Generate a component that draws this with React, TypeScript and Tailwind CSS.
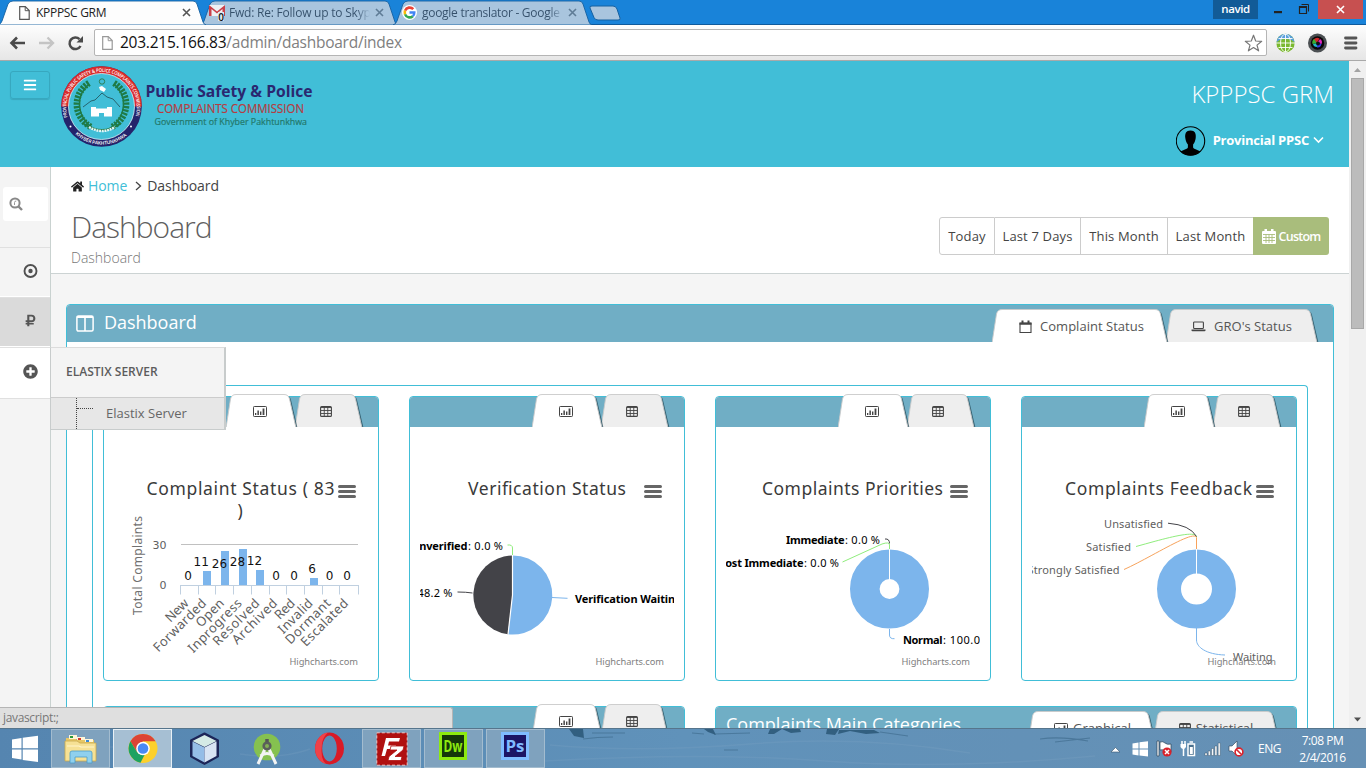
import React from "react";
import { FaHome, FaRubleSign, FaPlusCircle, FaBars } from "react-icons/fa";

const SANS = "font-['Open_Sans','Noto_Sans',sans-serif]";

/* ---------- small icons ---------- */

function ChartIcon() {
  return (
    <svg width="14" height="12" viewBox="0 0 14 12" fill="none">
      <rect x="0.500" y="0.500" width="13" height="10" rx="0.800" stroke="#444" strokeWidth="1" />
      <path d="M2 9V7h1.300v2zM4.400 9V4.500h1.500v4.500zM7 9V5.500h1.400v3.500zM9.600 9V2.500h1.800v6.500z" fill="#444" />
    </svg>
  );
}

function TableIcon() {
  return (
    <svg width="12" height="11" viewBox="0 0 12 11" fill="none">
      <rect x="0.600" y="0.600" width="10.800" height="9.800" rx="1" stroke="#444" strokeWidth="1.100" />
      <path d="M1 1.500h10M1 4.500h10M1 7.500h10M4.250 1v9.500M7.750 1v9.500" stroke="#444" strokeWidth="0.900" />
    </svg>
  );
}

function CalendarOutline() {
  return (
    <svg width="13" height="14" viewBox="0 0 13 14" fill="none">
      <path d="M1 3.200h11v9.300H1z" stroke="#444" strokeWidth="1.100" />
      <path d="M0.500 2.600h12v2.200h-12zM2.500 0.500h2v3h-2zM8.500 0.500h2v3h-2z" fill="#444" />
    </svg>
  );
}

function CalendarSolid() {
  return (
    <svg width="14" height="15" viewBox="0 0 14 15">
      <path d="M0 3q0-1 1-1h12q1 0 1 1v11q0 1-1 1H1q-1 0-1-1z" fill="#fff" />
      <path d="M2.500 0h2.500v4h-2.500zM9 0h2.500v4H9z" fill="#fff" />
      <path d="M1 5.500h12M1 8.500h12M1 11.500h12M4 5.500v8.500M7 5.500v8.500M10 5.500v8.500" stroke="#a9bd7c" strokeWidth="0.900" />
    </svg>
  );
}

function LaptopIcon() {
  return (
    <svg width="15" height="11" viewBox="0 0 15 11" fill="none">
      <rect x="2.600" y="1" width="9.800" height="6.500" rx="0.800" stroke="#444" strokeWidth="1.100" />
      <path d="M0.500 8.600h14v1q0 0.700-1 0.700h-12q-1 0-1-0.700z" fill="#444" />
    </svg>
  );
}

function PageIcon({ color = "#555", className = "" }: { color?: string; className?: string }) {
  return (
    <svg className={className} width="11" height="14" viewBox="0 0 11 14" fill="#fff">
      <path d="M0.700 0.700h5.600l3.900 3.900v8.700h-9.500z" stroke={color} strokeWidth="1.200" />
      <path d="M6.200 0.700v4h4" stroke={color} strokeWidth="1" fill="none" />
    </svg>
  );
}

function CloseX({ color }: { color: string }) {
  return (
    <svg width="9" height="9" viewBox="0 0 9 9">
      <path d="M1 1l7 7M8 1l-7 7" stroke={color} strokeWidth="1.600" />
    </svg>
  );
}

/* ---------- browser chrome ---------- */

function BrowserTab({ w, fill, className, children }: { w: number; fill: string; className: string; children: React.ReactNode }) {
  return (
    <div className={`relative flex h-[25px] shrink-0 items-center ${className}`} style={{ width: w }}>
      <svg className="absolute inset-0" width={w} height="25">
        <path
          d={`M0 25 Q3 24 4 21 L10 4 Q11.500 1 15 1 H${w - 13} Q${w - 10} 1 ${w - 9} 4 L${w - 3} 22 Q${w - 2} 24.500 ${w} 25 Z`}
          fill={fill}
          stroke="#1560a0"
          strokeWidth="0.900"
        />
      </svg>
      <div className="relative flex w-full items-center">{children}</div>
    </div>
  );
}

function TabStrip() {
  return (
    <div className="flex h-[25px] border-b border-[#0f5a9c] bg-[#1983d9]">
      <BrowserTab w={208} fill="#fdfdfd" className="z-10 -ml-[2px]">
        <PageIcon className="ml-[21px]" />
        <span className="ml-[6px] w-[146px] text-[12px] leading-[18px] tracking-[-0.3px] whitespace-nowrap text-[#222]">KPPPSC GRM</span>
        <CloseX color="#555" />
      </BrowserTab>
      <BrowserTab w={198} fill="#a9c5de" className="-ml-[6px]">
        <svg className="ml-[9px]" width="16" height="17" viewBox="0 0 16 17">
          <rect x="0" y="1" width="16" height="11" fill="#eef1f5" />
          <path d="M0 12V1l8 6.500L16 1v11h-2.500V5L8 9.500 2.500 5v7z" fill="#c9404a" />
          <path d="M9 8h6v9H9z" fill="#dfe9f3" />
          <text x="9.200" y="16.500" fontSize="10" fontWeight="600" fill="#111" fontFamily="Open Sans">0</text>
        </svg>
        <span className="ml-[4px] w-[141px] overflow-hidden bg-linear-to-r from-[#35506b] from-90% to-[#a9c5de] bg-clip-text text-[12px] leading-[18px] tracking-[-0.22px] whitespace-nowrap text-transparent">
          Fwd: Re: Follow up to Skype
        </span>
        <span className="ml-[5px]"><CloseX color="#5f7c96" /></span>
      </BrowserTab>
      <BrowserTab w={199} fill="#a9c5de" className="-ml-[5px]">
        <svg className="ml-[9px]" width="15" height="15" viewBox="0 0 16 16" fill="none" strokeWidth="2.800">
          <circle cx="8" cy="8" r="8" fill="#fff" />
          <path d="M12 4.500A5.200 5.200 0 0 0 3.300 6" stroke="#ea4335" />
          <path d="M3.300 6a5.200 5.200 0 0 0 0 4" stroke="#fbbc05" />
          <path d="M3.300 10a5.200 5.200 0 0 0 8.200 2" stroke="#34a853" />
          <path d="M8 8h5.200a5.200 5.200 0 0 1-1.700 4" stroke="#4285f4" strokeWidth="2.500" />
        </svg>
        <span className="ml-[5px] w-[141px] overflow-hidden bg-linear-to-r from-[#35506b] from-90% to-[#a9c5de] bg-clip-text text-[12px] leading-[18px] tracking-[-0.28px] whitespace-nowrap text-transparent">
          google translator - Google
        </span>
        <span className="ml-[5px]"><CloseX color="#5f7c96" /></span>
      </BrowserTab>
      <svg className="mt-[5px] -ml-[3px]" width="32" height="17" viewBox="0 0 32 17">
        <path d="M1 3Q0 1 3 1H24q3 0 4 3l3 9q1 2-2 2H9q-3 0-4-2.500z" fill="#a9c5de" stroke="#1560a0" />
      </svg>
      <div className="ml-auto flex items-start">
        <div className="h-[19px] w-[45px] bg-[#125b97] text-center text-[11.500px] leading-[18px] font-semibold tracking-[-0.4px] text-white">navid</div>
        <svg width="60" height="19" viewBox="0 0 60 19">
          <path d="M16 11h8v2.200h-8z" fill="#222" />
          <path d="M41.500 6.500h7v7h-7z" fill="none" stroke="#222" strokeWidth="1.200" />
          <path d="M41 6h8v2h-8z" fill="#222" />
          <path d="M43.500 4.500h7v7" fill="none" stroke="#222" />
        </svg>
        <div className="mr-[3px] flex h-[19px] w-[45px] items-center justify-center bg-[#c75050]">
          <CloseX color="#fff" />
        </div>
      </div>
    </div>
  );
}

function Toolbar() {
  return (
    <div className="flex h-[36px] items-center border-b border-[#a9a9a9] bg-linear-to-b from-[#fdfdfd] to-[#e6e6e6]">
      <svg className="ml-[9px]" width="76" height="18" viewBox="0 0 76 18" fill="none" strokeWidth="2.300">
        <path d="M16 9H3M8 3.500L2.500 9L8 14.500" stroke="#4a4a4a" strokeWidth="2.600" />
        <path d="M30 9H43M38.500 3.500L44 9L38.500 14.500" stroke="#c4c4c4" />
        <path d="M71.500 12A5.800 5.800 0 1 1 70.500 5.200" stroke="#4a4a4a" strokeWidth="2.500" />
        <path d="M74 2v6.500h-6.500z" fill="#4a4a4a" />
      </svg>
      <div className="ml-[9px] flex h-[27px] w-[1173px] items-center rounded-[2px] border border-[#b5b5b5] bg-white">
        <PageIcon color="#999" className="ml-[7px]" />
        <span className="ml-[7px] text-[15.500px] tracking-[-0.24px] whitespace-nowrap text-[#808080]">
          <span className="text-[#111]">203.215.166.83</span>/admin/dashboard/index
        </span>
        <svg className="mr-[3px] ml-auto" width="19" height="18" viewBox="0 0 19 18">
          <path d="M9.500 1.200l2.200 5.800 6 0.300-4.700 3.800 1.600 5.700-5.100-3.300-5.100 3.300 1.600-5.700L1.300 7.300l6-0.300z" fill="#fff" stroke="#777" strokeWidth="1.200" strokeLinejoin="round" />
        </svg>
      </div>
      <svg className="ml-[8px]" width="20" height="20" viewBox="0 0 20 20" fill="none">
        <circle cx="10.500" cy="10" r="9.200" fill="#7bb92f" />
        <path d="M1.300 10a9.200 9.200 0 0 1 18.400 0q-2-4-9.200-4t-9.200 4" fill="#5a9fdc" />
        <path d="M10.500 1v18M1 10h19M3.500 5.500h14M3.500 14.500h14" stroke="#fff" strokeWidth="0.900" />
        <ellipse cx="10.500" cy="10" rx="5" ry="9" stroke="#fff" strokeWidth="0.900" />
      </svg>
      <svg className="ml-[12px]" width="20" height="20" viewBox="0 0 20 20">
        <circle cx="10.500" cy="10" r="9.500" fill="#4b4f52" />
        <circle cx="10.500" cy="10" r="6.800" fill="#080808" />
        <path d="M10 10L6.500 6.500q3-3 6-1z" fill="#d0262a" />
        <path d="M10 10l3-4q3 2 1.500 5z" fill="#e025c0" />
        <path d="M10 10l4.500 1q-1 4-4.500 3.500z" fill="#3a3ce0" />
        <path d="M10 10v4q-3.500 0-4-3z" fill="#20b8c8" />
        <path d="M10 10l-4.500 1q-1-3 1.500-5z" fill="#3ab030" />
        <circle cx="11" cy="10.500" r="2" fill="#111" />
      </svg>
      <svg className="ml-[16px]" width="16" height="14" viewBox="0 0 16 14">
        <path d="M2.500 2h10.500M2.500 7h10.500M2.500 12h10.500" stroke="#555" strokeWidth="2.800" strokeLinecap="round" />
      </svg>
    </div>
  );
}

/* ---------- page header ---------- */

function Logo() {
  return (
    <svg className="mt-[4px] ml-[10px]" width="256" height="84" viewBox="60 65 256 84">
      <defs>
        <path id="ringTop" d="M66.500 117.500A36.500 36.500 0 1 1 136.500 117.500" />
        <path id="ringBottom" d="M70.500 126A37 37 0 0 0 133 126" />
      </defs>
      <circle cx="101.500" cy="106.500" r="40.300" fill="#24236b" />
      <path d="M61.200 106.500a40.300 40.300 0 0 1 80.600 0z" fill="#d92c2c" />
      <circle cx="101.500" cy="106.500" r="33" fill="#41bed7" stroke="#d5ecf2" strokeWidth="0.800" />
      <g fill="#fff" fontFamily="Open Sans" fontWeight="600">
        <text fontSize="5" dy="1.300"><textPath href="#ringTop" textLength="134" lengthAdjust="spacingAndGlyphs">PROVINCIAL PUBLIC SAFETY &amp; POLICE COMPLAINTS COMMISSION</textPath></text>
        <text fontSize="4.800" dy="1.500"><textPath href="#ringBottom" startOffset="9" textLength="54">KHYBER PAKHTUNKHWA</textPath></text>
      </g>
      <circle cx="70.500" cy="126.500" r="1" fill="#fff" />
      <circle cx="131" cy="126.500" r="1" fill="#fff" />
      <g fill="none" stroke="#1f7a45">
        <path d="M89 83C72 94 73 117 91 127" strokeWidth="6.500" strokeDasharray="2.200 1.200" />
        <path d="M114 83C131 94 130 117 112 127" strokeWidth="6.500" strokeDasharray="2.200 1.200" />
        <path d="M89 84C75 96 76 117 94 129M114 84C128 96 127 117 109 129" strokeWidth="1.500" />
        <path d="M83 107l8-6 4-1 7-7 5 4 6 2 7 8" stroke="#27646f" strokeWidth="1" />
        <circle cx="102" cy="81.500" r="2.700" stroke="#2c8058" />
      </g>
      <path d="M99 87l3-1 4 3-2 3-4-2z" fill="#fff" />
      <path d="M91 107h5v1.500h11v-1.500h5v9.500h-8v-3.500h-5v3.500h-8z" fill="#fff" />
      <path d="M84 124q18 12 36 0" stroke="#1f7a45" strokeWidth="2" fill="none" />
      <path d="M89 127q13 8 26 0" stroke="#e7f5f7" strokeWidth="2.500" strokeDasharray="2 .7" fill="none" />
      <text x="145.500" y="96.500" fontSize="15.500" fontWeight="700" fill="#2a2870" fontFamily="Open Sans" textLength="167" lengthAdjust="spacingAndGlyphs">Public Safety &amp; Police</text>
      <text x="157" y="113" fontSize="12.500" fill="#b83b3f" stroke="#b83b3f" strokeWidth="0.200" fontFamily="Open Sans" textLength="147" lengthAdjust="spacingAndGlyphs">COMPLAINTS COMMISSION</text>
      <text x="154.500" y="125" fontSize="9.500" fill="#23776a" stroke="#23776a" strokeWidth="0.200" fontFamily="Open Sans" textLength="152.500" lengthAdjust="spacingAndGlyphs">Government of Khyber Pakhtunkhwa</text>
    </svg>
  );
}

function PageHeader() {
  return (
    <div className="flex h-[106px] shrink-0 items-start bg-[#41bed7]">
      <div className="mt-[10px] ml-[10px] flex h-[28px] w-[40px] items-center justify-center rounded-[3px] border border-[#37a8bf] text-white shadow-[0_1px_1px_rgba(0,0,0,0.12)]">
        <FaBars size={14} />
      </div>
      <Logo />
      <div className="ml-auto flex flex-col items-end">
        <div className="mt-[16px] mr-[15px] text-[24px] leading-[34px] font-light text-white">KPPPSC GRM</div>
        <div className="mt-[15px] mr-[25px] flex items-center">
          <svg width="30" height="30" viewBox="0 0 30 30">
            <circle cx="14.500" cy="15" r="14.200" fill="none" stroke="#000" strokeWidth="1.100" />
            <path d="M14.500 4.500c4.500 0 5.700 3 5.200 7.500-.4 3-1.200 5-2.600 6.500v3q0 1 3 2l4.500 2Q19.500 29.500 14.500 29.500T4.400 25.500l4.500-2q3-1 3-2v-3C10.500 17 9.700 15 9.300 12c-.5-4.500.7-7.500 5.200-7.500z" fill="#000" />
          </svg>
          <span className="mb-[2px] ml-[7px] text-[13px] leading-[20px] font-bold tracking-[-0.22px] text-white">Provincial PPSC</span>
          <svg className="mb-[3px] ml-[4px]" width="11" height="8" viewBox="0 0 11 8" fill="none">
            <path d="M1 1.500l4.500 4.500L10 1.500" stroke="#fff" strokeWidth="1.600" />
          </svg>
        </div>
      </div>
    </div>
  );
}

/* ---------- sidebar ---------- */

function Sidebar() {
  return (
    <div className="relative z-10 flex w-[51px] shrink-0 flex-col border-r border-[#c9d2d0] bg-[#f4f4f4] text-[#555]">
      <div className="mt-[20px] ml-[3px] flex h-[34px] w-[45px] items-center rounded-[3px] bg-white">
        <svg className="ml-[6px]" width="15" height="15" viewBox="0 0 15 15" fill="none">
          <circle cx="6" cy="6" r="4.600" stroke="#888" strokeWidth="2" />
          <path d="M9.500 9.500l3.500 3.500" stroke="#888" strokeWidth="2.400" />
          <path d="M5.500 8V5.500q0-1.500 1.800-1.500" stroke="#999" strokeWidth="1" />
        </svg>
      </div>
      <div className="mt-[26px] flex h-[50px] items-center border-t border-b border-t-[#e0e0e0] border-b-white pb-[2px] pl-[23px]">
        <svg width="15" height="14" viewBox="0 0 15 14">
          <circle cx="7.500" cy="7" r="6" fill="none" stroke="#505050" strokeWidth="1.900" />
          <circle cx="7.500" cy="7" r="2.200" fill="#505050" />
        </svg>
      </div>
      <div className="flex h-[50px] items-center border-t border-b border-t-[#e0e0e0] border-b-white bg-[#dadada] pb-[3px] pl-[24px]"><FaRubleSign size={13} /></div>
      <div className="relative flex h-[52px] items-center border-t border-b border-[#e0e0e0] bg-white pb-[4px] pl-[23px]">
        <FaPlusCircle size={15} />
        <div className="absolute -top-px left-[50px] h-[83px] w-[176px] border-t border-r-2 border-b border-l border-[#c8cccc] border-t-[#dcdcdc] bg-[#f4f4f4]">
          <div className="flex h-[50px] items-center border-b border-[#ccc] pb-[2px] pl-[15px] text-[12px] leading-none font-semibold text-[#5c5c5c]">ELASTIX SERVER</div>
          <div className="flex h-[31px] bg-[#e7e7e7]">
            <div className="ml-[25px] w-[1px] border-l border-dotted border-[#444]" />
            <div className="mt-[10px] w-[16px] border-t border-dotted border-[#444]" />
            <div className="ml-[13px] flex items-center text-[13px] text-[#666]">Elastix Server</div>
          </div>
        </div>
      </div>
    </div>
  );
}

/* ---------- content ---------- */

function Tab({ w, active, className = "", children }: { w: number; active?: boolean; className?: string; children: React.ReactNode }) {
  const p = `M0 34 L4.500 5 Q5.500 0.500 10 0.500 H${w - 12} Q${w - 7.5} 0.500 ${w - 6.5} 5 L${w} 34`;
  return (
    <div className={`relative flex h-[33px] shrink-0 items-center justify-center text-[13px] text-[#555] ${active ? "z-[2]" : "z-[1]"} ${className}`} style={{ width: w }}>
      <svg className="absolute top-0 left-0" width={w + 5} height="33">
        <path d={`M${w - 11} 1.500 Q${w - 6} 1.500 ${w - 5} 6 L${w + 1.5} 34 H${w - 11} Z`} fill="#1e4654" opacity="0.750" />
        <path d={p} fill={active ? "#fff" : "#eee"} stroke="#c9c9c9" strokeWidth="0.900" />
      </svg>
      <div className="relative mt-[2px] flex items-center whitespace-nowrap">{children}</div>
    </div>
  );
}

function Burger({ x }: { x: number }) {
  return <path d={`M${x + 1} 486.500h15M${x + 1} 491.500h15M${x + 1} 496.500h15`} stroke="#666" strokeWidth="3" strokeLinecap="round" />;
}

const CF = "Noto Sans, Open Sans, sans-serif";

function Txt({ x, y, l, s = 11, b, c = "#000", anchor, children }: { x: number; y: number; l?: number; s?: number; b?: boolean; c?: string; anchor?: "end" | "middle"; children: string }) {
  return (
    <text x={x} y={y} fontSize={s} fontWeight={b ? 700 : 400} fill={c} textAnchor={anchor} textLength={l} xmlSpace="preserve">
      {children}
    </text>
  );
}

function Chart({ x, title, tx, tl, children }: { x: number; title: string; tx: number; tl: number; children: React.ReactNode }) {
  return (
    <div className="flex h-[253px] justify-center overflow-hidden">
      <svg className="block" width="254" height="253" viewBox={`${x + 11} 427 254 253`} fontFamily={CF} fill="none">
        <Txt x={tx} y={495} l={tl} s={17.500} c="#3a3a3a">{title}</Txt>
        <Burger x={x + 235.500} />
        {children}
        <Txt x={x + 186.500} y={665} l={68.500} s={9.300} c="#808080">Highcharts.com</Txt>
      </svg>
    </div>
  );
}

const CATS: [string, number][] = [
  ["New", 27], ["Forwarded", 69], ["Open", 34], ["Inprogress", 70], ["Resolved", 60],
  ["Archived", 58], ["Red", 23], ["Invalid", 43], ["Dormant", 58], ["Escalated", 61],
];
const BARS = [[203, 571], [221, 551], [239, 549], [256, 570], [310, 578]];
const VALUES: [string, number, number][] = [
  ["0", 188, 580], ["11", 201.200, 566], ["26", 219.500, 568], ["28", 237.500, 566], ["12", 254.500, 565],
  ["0", 276, 580], ["0", 294, 580], ["6", 312, 573], ["0", 329.500, 580], ["0", 347, 580],
];

function StatusChart() {
  return (
    <Chart x={103} title="Complaint Status ( 83" tx={146.500} tl={188}>
      <Txt x={237.500} y={517} s={17.500} c="#3a3a3a">)</Txt>
      <g transform="rotate(-90 142 615)"><Txt x={142} y={615} l={99} s={12} c="#707070">Total Complaints</Txt></g>
      <g fontFamily="DejaVu Sans">
        <Txt x={166.500} y={549} s={11} c="#606060" anchor="end">30</Txt>
        <Txt x={166.500} y={589} s={11} c="#606060" anchor="end">0</Txt>
      </g>
      <path d="M181 544.500H358" stroke="#c0c0c0" />
      {BARS.map(([bx, by]) => <rect key={bx} x={bx} y={by} width="8" height={585 - by} fill="#7cb5ec" />)}
      <path d="M180 585.500H358.500M180.500 585v9.500M198.500 585v9.500M215.500 585v9.500M233.500 585v9.500M251.500 585v9.500M269.500 585v9.500M286.500 585v9.500M304.500 585v9.500M322.500 585v9.500M339.500 585v9.500M358.500 585v9.500" stroke="#c0d0e0" />
      <g fontFamily="DejaVu Sans">
        {VALUES.map(([v, vx, vy], i) => <Txt key={i} x={vx} y={vy} s={12} anchor="middle" c="#111">{v}</Txt>)}
      </g>
      {CATS.map(([n, l], i) => {
        const ex = 189.500 + i * 17.750;
        return (
          <g key={n} transform={`rotate(-45 ${ex} 604)`}>
            <Txt x={ex - l} y={604} l={l} s={13} c="#606060">{n}</Txt>
          </g>
        );
      })}
    </Chart>
  );
}

function VerificationChart() {
  return (
    <Chart x={409} title="Verification Status" tx={468} tl={158}>
      <Txt x={411} y={550} l={56.500} b>Unverified</Txt>
      <Txt x={468} y={550} l={35}>: 0.0 %</Txt>
      <Txt x={417.500} y={597} l={35}>48.2 %</Txt>
      <Txt x={575} y={603} l={107} b>Verification Waiting</Txt>
      <path d="M512.500 595V555.500A39.500 39.500 0 1 1 508 634.200Z" fill="#7cb5ec" />
      <path d="M512.500 595L508 634.200A39.500 39.500 0 0 1 512.500 555.500Z" fill="#434348" />
      <path d="M512.500 555V595L508 634.500" stroke="#fff" strokeWidth="1.200" />
      <path d="M507.500 545Q512.500 544.500 512.500 548V555" stroke="#90ed7d" />
      <path d="M457.500 592Q466 592 472.500 593" stroke="#434348" />
      <path d="M552 597.500L567.500 598.300" stroke="#7cb5ec" />
    </Chart>
  );
}

function PrioritiesChart() {
  return (
    <Chart x={715} title="Complaints Priorities" tx={762} tl={181}>
      <Txt x={786} y={544} l={58.500} b>Immediate</Txt>
      <Txt x={845} y={544} l={35}>: 0.0 %</Txt>
      <Txt x={715} y={567} l={88.500} b>Most Immediate</Txt>
      <Txt x={804} y={567} l={35}>: 0.0 %</Txt>
      <Txt x={903} y={644} l={39.500} b>Normal</Txt>
      <Txt x={943} y={644} l={50}>: 100.0 %</Txt>
      <circle cx="889.500" cy="589" r="24.700" stroke="#7cb5ec" strokeWidth="29.600" />
      <path d="M889.500 549V580" stroke="#fff" />
      <path d="M885 539Q889.500 538.500 889.500 543.500" stroke="#434348" />
      <path d="M842.500 562L882 544Q889.500 541.500 889.500 545V549" stroke="#90ed7d" />
      <path d="M889.500 629V635Q889.500 639 894.500 638.700" stroke="#7cb5ec" />
    </Chart>
  );
}

function FeedbackChart() {
  return (
    <Chart x={1021} title="Complaints Feedback" tx={1065} tl={187}>
      <Txt x={1104} y={528} l={59} c="#606060">Unsatisfied</Txt>
      <Txt x={1086} y={551} l={45} c="#606060">Satisfied</Txt>
      <Txt x={1027.500} y={574} l={92} c="#606060">Strongly Satisfied</Txt>
      <Txt x={1233} y={660.500} l={39.500} c="#606060">Waiting</Txt>
      <circle cx="1196.500" cy="589" r="27.500" stroke="#7cb5ec" strokeWidth="24" />
      <path d="M1196.500 549V574" stroke="#fff" />
      <path d="M1136 546.500C1160 540 1196 529 1196.500 537" stroke="#90ed7d" />
      <path d="M1124 569.500C1150 558 1196 528 1196.500 538V549" stroke="#f7a35c" />
      <path d="M1168 523.200Q1190 525 1196.500 536.500" stroke="#434348" />
      <path d="M1196.500 628V640C1196.500 647 1206 654.500 1225 655" stroke="#7cb5ec" />
    </Chart>
  );
}

function CardTabs() {
  return (
    <div className="flex h-[30px] items-end justify-end rounded-t-[3px] bg-[#70aec5] pr-[16px]">
      <Tab w={70} active><span className="-ml-[2px]"><ChartIcon /></span></Tab>
      <Tab w={67} className="-ml-px"><span className="-ml-[6px]"><TableIcon /></span></Tab>
    </div>
  );
}

function Card({ children }: { children: React.ReactNode }) {
  return (
    <div className="h-[285px] w-[276px] rounded-[4px] border border-[#41bed7] bg-white">
      <CardTabs />
      {children}
    </div>
  );
}

function Dashboard() {
  return (
    <div className="flex w-[1298px] flex-col overflow-hidden bg-[#f5f5f5]">
      <div className="flex h-[107px] shrink-0 justify-between border-b border-[#ccd3d3] bg-white pr-[20px] pl-[20px]">
        <div>
          <div className="mt-[9px] flex h-[20px] items-center text-[14px] leading-[20px] text-[#444]">
            <FaHome size={13} color="#222" />
            <span className="ml-[4px] tracking-[-0.1px] text-[#41bed7]">Home</span>
            <svg className="ml-[8px]" width="7" height="10" viewBox="0 0 7 10" fill="none"><path d="M1 1l4.500 4L1 9" stroke="#444" strokeWidth="1.300" /></svg>
            <span className="ml-[5px] tracking-[-0.05px]">Dashboard</span>
          </div>
          <div className="mt-[9px] text-[30px] leading-[44px] font-light tracking-[-1px] text-[#606060]">Dashboard</div>
          <div className="text-[14px] leading-[18px] font-light text-[#777]">Dashboard</div>
        </div>
        <div className="mt-[50px] flex h-[38px] text-[13px] tracking-[0.15px] text-[#444]">
          <div className="flex w-[56px] items-center justify-center rounded-l-[3px] border border-[#ccc] pt-[2px]">Today</div>
          <div className="flex w-[86px] items-center justify-center border-t border-r border-b border-[#ccc] pt-[2px]">Last 7 Days</div>
          <div className="flex w-[87px] items-center justify-center border-t border-r border-b border-[#ccc] pt-[2px]">This Month</div>
          <div className="flex w-[85px] items-center justify-center border-t border-b border-[#ccc] pt-[2px]">Last Month</div>
          <div className="flex w-[76px] items-center justify-center gap-[3px] rounded-r-[3px] bg-[#a9bd7c] text-[12.500px] font-semibold tracking-[-0.75px] text-white"><CalendarSolid /><span className="pt-[2px]">Custom</span></div>
        </div>
      </div>
      <div className="mt-[30px] ml-[15px] flex h-[440px] w-[1268px] flex-col rounded-t-[4px] border border-[#41bed7] bg-white">
        <div className="flex h-[37px] shrink-0 items-end rounded-t-[3px] bg-[#70aec5] pr-[16px]">
          <div className="mr-auto flex h-full items-center pb-[2px] text-[18px] tracking-[-0.02px] text-white">
            <svg className="mt-[2px] ml-[9px]" width="18" height="17" viewBox="0 0 18 17" fill="none" stroke="#fff"><rect x="0.900" y="0.900" width="16.200" height="15.200" rx="1.500" strokeWidth="1.500" /><path d="M9 3v13" strokeWidth="1.600" /><path d="M1 2h16" strokeWidth="2" /></svg>
            <span className="ml-[10px]">Dashboard</span>
          </div>
          <Tab w={175} active><span className="ml-[4px]"><CalendarOutline /></span><span className="ml-[8px] tracking-[0.02px]">Complaint Status</span></Tab>
          <Tab w={151} className="-ml-px"><LaptopIcon /><span className="ml-[8px]">GRO's Status</span></Tab>
        </div>
        <div className="mt-[43px] ml-[25px] flex w-[1216px] grow flex-col rounded-t-[4px] border border-b-0 border-[#41bed7] px-[10px] pt-[10px]">
          <div className="flex gap-[30px]">
            <Card><StatusChart /></Card>
            <Card><VerificationChart /></Card>
            <Card><PrioritiesChart /></Card>
            <Card><FeedbackChart /></Card>
          </div>
          <div className="mt-[25px] flex gap-[30px]">
            <div className="w-[582px] rounded-t-[4px] border border-[#41bed7]">
              <CardTabs />
            </div>
            <div className="w-[582px] rounded-t-[4px] border border-[#41bed7]">
              <div className="flex h-[37px] items-end rounded-t-[3px] bg-[#70aec5] pr-[17px]">
                <span className="mr-auto ml-[10px] text-[18px] leading-[39px] text-white">Complaints Main Categories</span>
                <Tab w={127} active><span className="ml-[2px]"><ChartIcon /></span><span className="ml-[5px]">Graphical</span></Tab>
                <Tab w={126} className="-ml-[2px]"><TableIcon /><span className="ml-[5px]">Statistical</span></Tab>
              </div>
            </div>
          </div>
        </div>
      </div>
    </div>
  );
}

/* ---------- taskbar ---------- */

function TaskButton({ active, className = "", children }: { active?: boolean; className?: string; children: React.ReactNode }) {
  return (
    <div className={`flex h-[39px] w-[59px] items-center justify-center border ${active ? "border-[#e8f0f6] bg-[#a6bfd3]" : "border-[#a3bccf] bg-[#7fa2be]"} ${className}`}>
      {children}
    </div>
  );
}

function AdobeIcon({ label, bg, fg }: { label: string; bg: string; fg: string }) {
  return (
    <div className="mr-[2px] mb-[5px] flex h-[28px] w-[28px] items-center justify-center border-[3px]" style={{ background: bg, borderColor: fg }}>
      <svg width="22" height="22" viewBox="0 0 22 22">
        <text x="1.500" y="16.500" fontSize="16" fontWeight="700" fontFamily="Open Sans" textLength="19" lengthAdjust="spacingAndGlyphs" fill={fg}>{label}</text>
      </svg>
    </div>
  );
}

function Taskbar() {
  return (
    <div className="relative flex h-[40px] items-center overflow-hidden border-t border-[#56758c] bg-linear-to-r from-[#5585b0] via-[#6092ba] to-[#6690b4]">
      <svg className="absolute inset-0" width="1366" height="40">
        <g fill="#234f6e" opacity="0.750">
          <path d="M383 0h7l-1 4-6 1zM398 0h12l-3 3-8 1z" />
          <path d="M569 0h14l1 9-10-2z" />
          <path d="M704 0h9l3 6-8-3zM770 0h12l-8 5h-6zM782 0h18l1 3-10 1zM827 0h12l-4 6-9-1zM839 1h35l6 3-14 1-16-3-12 3z" />
        </g>
        <path d="M583 10q14-2 30-2M592 4h33M692 4l12 1M714 5l36-1M724 21h14M880 3l28 4M1040 10q20-3 48 2M1055 13l35-4" stroke="#34607f" strokeWidth="1.200" opacity="0.500" fill="none" />
        <path d="M550 16q90 8 200-1t220 9M545 32q160-9 280 0t270-5M110 18h50M240 25q40 6 70-5" stroke="#89abc6" strokeWidth="1.500" opacity="0.200" fill="none" />
      </svg>
      <svg className="relative ml-[11px]" width="28" height="28" viewBox="0 0 28 28" fill="#fff">
        <path d="M1 4.500l9.500-1.500v10.300H1zM11.700 2.800L27 0.700v12.600H11.700zM1 14.500h9.500v10L1 23zM11.700 14.500H27V27l-15.300-2z" />
      </svg>
      <TaskButton className="relative ml-[12px]">
        <svg width="34" height="32" viewBox="0 0 34 32">
          <path d="M2 5h9l2 2h17v19H2z" fill="#e6c766" />
          <path d="M5 2h8v4H5zM13 4h8v3h-8zM21 6h8v3h-8z" fill="#fff6d8" />
          <path d="M6 3h3v2H6z" fill="#2a9a3c" />
          <path d="M14 5h3v2h-3z" fill="#d63a2c" />
          <path d="M22 7h3v2h-3z" fill="#3a8ad6" />
          <path d="M1 8h12l3 2h16v18H1z" fill="#f6e195" stroke="#c9a84c" strokeWidth="0.800" />
          <path d="M3 13h12l2 1h13" stroke="#fff6cc" strokeWidth="1.200" fill="none" />
          <path d="M6 30V20q0-2 2-2h18q2 0 2 2v10h-5v-6H11v6z" fill="#8fd0ee" stroke="#4b9cc8" strokeWidth="0.800" />
        </svg>
      </TaskButton>
      <TaskButton active className="relative ml-[3px]">
        <svg width="30" height="31" viewBox="0 0 30 30">
          <circle cx="15" cy="15" r="14.500" fill="#fcd02c" />
          <path d="M2.400 7.800A14.500 14.500 0 0 1 27.600 7.800H15L9 18.500z" fill="#dc4435" />
          <path d="M2.400 7.800L9 18.500q3 3.500 7.500 3l-4 7.700A14.500 14.500 0 0 1 2.400 7.800z" fill="#1da261" />
          <circle cx="15" cy="15" r="6.800" fill="#fff" />
          <circle cx="15" cy="15" r="5.300" fill="#4a8af4" />
        </svg>
      </TaskButton>
      <svg className="relative ml-[16px]" width="33" height="34" viewBox="0 0 33 34" strokeLinejoin="round">
        <path d="M16.500 1.500l13.500 7v16l-13.500 7.500-13.500-7.500V8.500z" fill="#1c2558" stroke="#1c2558" strokeWidth="2" />
        <path d="M16.500 3l12 6-12 6-12-6z" fill="#d5eae6" />
        <path d="M4.500 9.500l12 6v15l-12-6.500z" fill="#95bde7" />
        <path d="M28.500 9.500l-12 6v15l12-6.500z" fill="#d9e4f4" />
      </svg>
      <svg className="relative ml-[31px]" width="30" height="34" viewBox="0 0 30 34">
        <circle cx="15" cy="15" r="13.300" fill="#85c150" />
        <path d="M15 7v3" stroke="#555" strokeWidth="3.500" />
        <path d="M13.500 16L6 32M16.500 16L24 32M8.500 24q6.500-5 13 0" stroke="#f3f4f4" strokeWidth="3" fill="none" />
        <circle cx="15" cy="14" r="3.300" fill="#84b054" stroke="#5a5f5a" strokeWidth="2.600" />
      </svg>
      <svg className="relative ml-[32px]" width="32" height="33" viewBox="0 0 32 33">
        <path d="M15.500 0.500a14.500 16 0 1 0 0.010 0zM15.500 3.500a7.300 13 0 1 1-0.010 0z" fill="#d91a26" fillRule="evenodd" />
        <path d="M14 0.600A14.500 16 0 0 0 12 32Q6 27 8 12Q9 5 14 0.600" fill="#ef4148" />
      </svg>
      <TaskButton className="relative ml-[16px]">
        <svg width="32" height="34" viewBox="0 0 32 34">
          <rect x="0.800" y="0.800" width="30.400" height="32.400" fill="#b01010" stroke="#e8c6c6" strokeWidth="1" strokeDasharray="3 2" />
          <path d="M10 6h14l-1 3.500h-10l-1 4h8l-1 3.500h-8l-2 7H5.500z" fill="#fff" />
          <path d="M15 14h13l-1 4-8 6.500h7l-1 4H12l1-4 8-6.500h-7z" fill="#fff" stroke="#b01010" strokeWidth="0.800" />
        </svg>
      </TaskButton>
      <TaskButton className="relative ml-[3px]"><AdobeIcon label="Dw" bg="#15370a" fg="#8dea10" /></TaskButton>
      <TaskButton className="relative ml-[3px]"><AdobeIcon label="Ps" bg="#1b1464" fg="#7fbcff" /></TaskButton>
      <svg className="relative ml-auto" width="138" height="20" viewBox="1110 739 138 20">
        <path d="M1111 752l4.500-4.500 4.500 4.500z" fill="#fff" stroke="#38566e" strokeWidth="0.600" />
        <path d="M1132.500 743.500l6-1v6h-6zM1139.500 742.300l8.500-1v7.200h-8.500zM1132.500 749.500h6v6l-6-1zM1139.500 749.500h8.500v7l-8.500-1z" fill="#fff" />
        <path d="M1157 741h2v15h-2zM1160 742q3-1 5 1t6 1v8q-4 1-6-1t-5-1z" fill="#fff" stroke="#2b4358" strokeWidth="0.700" />
        <circle cx="1167" cy="752" r="4.600" fill="#d8222b" />
        <path d="M1165 750l4 4M1169 750l-4 4" stroke="#fff" strokeWidth="1.500" />
        <path d="M1188 744h6.500v11.500h-6.500z" fill="#4a708e" stroke="#fff" strokeWidth="1.500" />
        <path d="M1189.500 742h3.500" stroke="#fff" strokeWidth="1.500" />
        <path d="M1189.800 747h3v7h-3z" fill="#fff" />
        <path d="M1182 741v3M1185 741v3M1183.500 748v8" stroke="#fff" strokeWidth="1.500" />
        <path d="M1180.500 744h5.500v3q-1 2-2.700 2t-2.800-2z" fill="#fff" />
        <path d="M1205 753h2v2.500h-2zM1208.300 751h2v4.500h-2zM1211.600 748.500h2v7h-2zM1214.900 746h2v9.500h-2zM1218.200 743h2v12.500h-2z" fill="#fff" stroke="#2b4358" strokeWidth="0.400" />
        <path d="M1229 746h3l5-5v15l-5-5h-3z" fill="#fff" stroke="#2b4358" strokeWidth="0.600" />
        <circle cx="1239" cy="752" r="3.900" fill="#fff" stroke="#d8222b" strokeWidth="1.600" />
        <path d="M1236.200 749.200l5.600 5.600" stroke="#d8222b" strokeWidth="1.600" />
      </svg>
      <span className="relative ml-[10px] w-[32px] text-[12px] tracking-[-0.5px] text-white">ENG</span>
      <div className="relative mr-[11px] w-[65px] text-center text-[12px] leading-[17px] tracking-[-0.45px] text-white">
        7:08 PM<br />2/4/2016
      </div>
    </div>
  );
}

export default function App() {
  return (
    <div className={`flex h-[768px] w-[1366px] flex-col overflow-hidden bg-white ${SANS}`}>
      <TabStrip />
      <Toolbar />
      <div className="relative flex h-[667px] overflow-hidden">
        <div className="flex w-[1349px] flex-col">
          <PageHeader />
          <div className="flex h-[561px]">
            <Sidebar />
            <Dashboard />
          </div>
        </div>
        <div className="flex w-[17px] flex-col items-center bg-[#f0f0f0]">
          <svg width="17" height="17"><path d="M5 11l3.500-4 3.500 4z" fill="#a3a3a3" /></svg>
          <div className="h-[251px] w-[13px] border border-[#a8a8a8] bg-[#bcbcbc]" />
          <svg className="mt-auto" width="17" height="17"><path d="M5 6.500l3.500 4 3.500-4z" fill="#505050" /></svg>
        </div>
        <div className="absolute bottom-0 left-0 z-20 h-[21px] w-[453px] rounded-tr-[3px] border-t border-r border-[#b5b5b5] bg-[#dfdfdf] pl-[3px] text-[12px] leading-[20px] tracking-[-0.35px] text-[#777]">
          javascript:;
        </div>
      </div>
      <Taskbar />
    </div>
  );
}
